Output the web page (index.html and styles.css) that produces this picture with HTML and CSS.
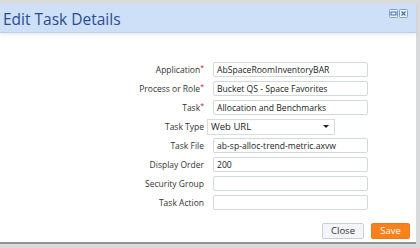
FILE: index.html
```
<!DOCTYPE html>
<html>
<head>
<meta charset="utf-8">
<link rel="stylesheet" href="styles.css">
</head>
<body>
<div class="page">
  <div class="dialog">
    <div class="header">
      <span class="title">Edit Task Details</span>
      <div class="tools">
        <svg class="tool" width="9" height="9" viewBox="0 0 9 9"><rect x="0.5" y="0.5" width="8" height="8" rx="1" fill="#eef4fd" stroke="#7f9fd3"/><rect x="2" y="3" width="5" height="3" fill="none" stroke="#3f64a8" stroke-width="1"/></svg>
        <svg class="tool" width="9" height="9" viewBox="0 0 9 9"><rect x="0.5" y="0.5" width="8" height="8" rx="1" fill="#eef4fd" stroke="#7f9fd3"/><path d="M2.5 2.5 L6.5 6.5 M6.5 2.5 L2.5 6.5" stroke="#3f64a8" stroke-width="1.1"/></svg>
      </div>
    </div>
    <div class="body">
      <div class="form">
        <div class="row"><label class="lbl">Application<sup>*</sup></label><div class="field">AbSpaceRoomInventoryBAR</div></div>
        <div class="row"><label class="lbl">Process or Role<sup>*</sup></label><div class="field">Bucket QS - Space Favorites</div></div>
        <div class="row"><label class="lbl">Task<sup>*</sup></label><div class="field">Allocation and Benchmarks</div></div>
        <div class="row"><label class="lbl">Task Type</label><div class="select"><span>Web URL</span><span class="arrow"></span></div></div>
        <div class="row"><label class="lbl">Task File</label><div class="field">ab-sp-alloc-trend-metric.axvw</div></div>
        <div class="row"><label class="lbl">Display Order</label><div class="field">200</div></div>
        <div class="row"><label class="lbl">Security Group</label><div class="field"></div></div>
        <div class="row"><label class="lbl">Task Action</label><div class="field"></div></div>
      </div>
      <div class="actions">
        <button class="btn close">Close</button>
        <button class="btn save">Save</button>
      </div>
    </div>
  </div>
</div>
</body>
</html>
```
FILE: styles.css
```
html, body {
  margin: 0;
  padding: 0;
}
body {
  width: 420px;
  height: 248px;
  overflow: hidden;
  background: #d9dadc;
  font-family: "Open Sans", "DejaVu Sans", sans-serif;
}
.page {
  padding-top: 4px;
  height: 244px;
}
.dialog {
  width: 416px;
  height: 240px;
  background: #ffffff;
  border-bottom: 2px solid #8c939b;
  box-sizing: border-box;
  display: flex;
  flex-direction: column;
}
.header {
  height: 29px;
  background: #cde0f7;
  border-bottom: 1px solid #bcd0ec;
  box-sizing: border-box;
  display: flex;
  align-items: center;
  justify-content: space-between;
  padding-left: 3px;
  padding-right: 8px;
  box-shadow: 0 2px 3px rgba(0,0,0,0.08);
}
.title {
  font-size: 15.5px;
  color: #2b4c8e;
  margin-top: 1px;
}
.tools {
  display: flex;
  gap: 1px;
  align-self: flex-start;
  margin-top: 5px;
}
.tool {
  display: block;
}
.body {
  flex: 1;
  display: flex;
  flex-direction: column;
  justify-content: space-between;
}
.form {
  display: flex;
  flex-direction: column;
  gap: 4px;
  padding-top: 29px;
}
.row {
  display: flex;
  align-items: center;
  height: 15px;
}
.lbl {
  width: 204px;
  text-align: right;
  font-size: 8.5px;
  color: #333333;
  flex: none;
}
.lbl sup {
  color: #cc2222;
  font-size: 7px;
  vertical-align: top;
  line-height: 1;
}
.field {
  margin-left: 9px;
  width: 155px;
  height: 15px;
  box-sizing: border-box;
  border: 1px solid #d3d8de;
  border-radius: 2px;
  background: #fff;
  font-size: 8.6px;
  color: #222;
  padding-left: 3px;
  display: flex;
  align-items: center;
}
.select {
  margin-left: 3px;
  width: 128px;
  height: 16px;
  box-sizing: border-box;
  border: 1px solid #d8dce0;
  background: #fff;
  font-size: 9.5px;
  color: #222;
  padding-left: 3px;
  padding-right: 5px;
  display: flex;
  align-items: center;
  justify-content: space-between;
}
.arrow {
  width: 0;
  height: 0;
  border-left: 3px solid transparent;
  border-right: 3px solid transparent;
  border-top: 3px solid #222;
}
.actions {
  display: flex;
  justify-content: flex-end;
  gap: 7px;
  padding-right: 6px;
  padding-bottom: 3px;
}
.btn {
  height: 16px;
  font-family: "Open Sans", "DejaVu Sans", sans-serif;
  font-size: 9.5px;
  padding: 0;
  border-radius: 2px;
  line-height: 14px;
}
.close {
  width: 42px;
  background: #f3f5f9;
  border: 1px solid #c9d0da;
  color: #333;
}
.save {
  width: 39px;
  background: #f7821b;
  border: 1px solid #f0781a;
  color: #fff;
}
```
